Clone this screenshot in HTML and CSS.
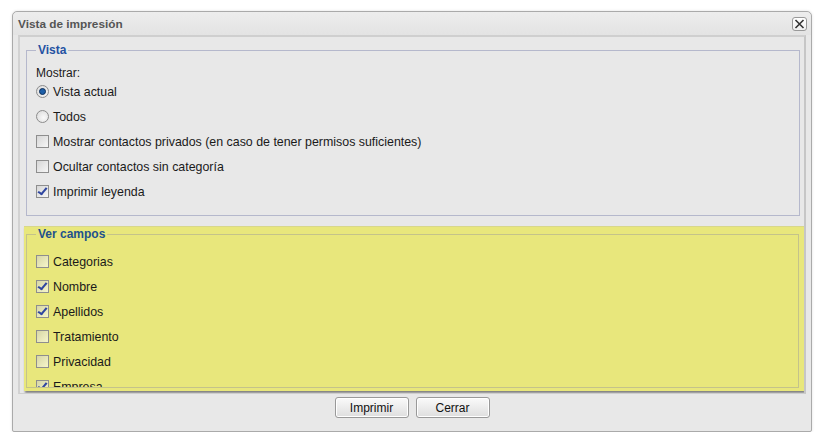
FILE: index.html
```html
<!DOCTYPE html>
<html>
<head>
<meta charset="utf-8">
<link rel="stylesheet" href="styles.css">
</head>
<body>
<div class="dialog">
  <div class="titlebar">
    <span class="title">Vista de impresión</span>
    <span class="close"><svg width="13" height="12" viewBox="0 0 13 12"><path d="M2.5 2 L10.5 10 M10.5 2 L2.5 10" stroke="#333" stroke-width="1.6" fill="none"/></svg></span>
  </div>
  <div class="panel">
    <fieldset class="fs fs-vista">
      <legend>Vista</legend>
      <div class="label">Mostrar:</div>
      <div class="row"><span class="radio on"></span>Vista actual</div>
      <div class="row"><span class="radio"></span>Todos</div>
      <div class="row"><span class="cb"></span>Mostrar contactos privados (en caso de tener permisos suficientes)</div>
      <div class="row"><span class="cb"></span>Ocultar contactos sin categoría</div>
      <div class="row"><span class="cb on"></span>Imprimir leyenda</div>
    </fieldset>
    <div class="drop">
      <fieldset class="fs fs-campos">
        <legend>Ver campos</legend>
        <div class="row"><span class="cb"></span>Categorias</div>
        <div class="row"><span class="cb on"></span>Nombre</div>
        <div class="row"><span class="cb on"></span>Apellidos</div>
        <div class="row"><span class="cb"></span>Tratamiento</div>
        <div class="row"><span class="cb"></span>Privacidad</div>
        <div class="row"><span class="cb on"></span>Empresa</div>
      </fieldset>
    </div>
  </div>
  <div class="buttons">
    <button class="btn">Imprimir</button>
    <button class="btn">Cerrar</button>
  </div>
</div>
</body>
</html>
```
FILE: styles.css
```css
body {
  margin: 0;
  background: #fff;
  font-family: "Liberation Sans", Arial, sans-serif;
  color: #1a1a1a;
}
.dialog {
  margin: 11px 0 0 12px;
  width: 798px;
  height: 419px;
  border: 1px solid #aaa;
  border-radius: 5px 5px 2px 2px;
  background: #e8e8e8;
  box-shadow: 0 0 3px rgba(0,0,0,0.12);
  display: flex;
  flex-direction: column;
}
.titlebar {
  height: 23px;
  flex: none;
  display: flex;
  align-items: center;
  justify-content: space-between;
  padding: 0 4px 0 5px;
  background: linear-gradient(#ededed, #e3e3e3);
  border-radius: 5px 5px 0 0;
}
.title {
  font-weight: bold;
  font-size: 11.8px;
  color: #555;
}
.close {
  width: 13px;
  height: 12px;
  border: 1px solid #999;
  border-radius: 3px;
  background: linear-gradient(#fff, #f0f0f0);
  display: flex;
}
.panel {
  flex: none;
  margin: 0 5px 0 5px;
  height: 356px;
  border-top: 2px solid #cfcfcf;
  border-left: 2px solid #d2d2d2;
  border-right: 2px solid #c6c6c6;
  border-bottom: 1px solid #cfcfcf;
  overflow: hidden;
}
.fs {
  border: 1px solid #b5b8cc;
  padding: 0 9px;
  margin: 0;
  min-width: 0;
}
.fs legend {
  padding: 0 2px;
  font-weight: bold;
  font-size: 12px;
  line-height: 12px;
  color: #2452a2;
}
.fs-vista {
  margin: 7px 4px 0 6px;
  padding-top: 11px;
  padding-bottom: 11px;
}
.label {
  font-size: 12px;
  line-height: 12px;
}
.row {
  height: 25px;
  display: flex;
  align-items: center;
  font-size: 12.4px;
  white-space: nowrap;
}
.radio {
  width: 11px;
  height: 11px;
  border: 1px solid #8c8c8c;
  border-radius: 50%;
  background: radial-gradient(circle at 60% 60%, #fafafa, #d8d8d8);
  margin-right: 4px;
  flex: none;
  display: flex;
  align-items: center;
  justify-content: center;
}
.radio.on::after {
  content: "";
  width: 5px;
  height: 5px;
  border-radius: 50%;
  background: #1d5fa8;
  border: 1px solid #10305a;
}
.cb {
  width: 11px;
  height: 11px;
  border: 1px solid #8e8e8e;
  background: linear-gradient(135deg, rgba(200,200,200,0.55), rgba(255,255,255,0.6));
  margin-right: 4px;
  flex: none;
  position: relative;
}
.cb.on::after {
  content: "";
  position: absolute;
  left: 3px;
  top: 0px;
  width: 3px;
  height: 7px;
  border-right: 2px solid #2f46a0;
  border-bottom: 2px solid #2f46a0;
  transform: rotate(40deg) skewY(-8deg);
}
.drop {
  margin: 10px 0 0 4px;
  background: #e8e77c;
  padding: 1px 5px 3px 2px;
  border-top: 1px solid #d8d78a;
  box-shadow: 1px 2px 2px rgba(0,0,0,0.45);
}
.fs-campos {
  height: 160px;
  box-sizing: border-box;
  overflow: hidden;
  padding-top: 9px;
  border-color: #c4c38a;
}
.fs-campos legend {
  color: #22528c;
}
.buttons {
  display: flex;
  justify-content: center;
  gap: 7px;
  padding-top: 3px;
}
.btn {
  width: 74px;
  height: 21px;
  font-family: "Liberation Sans", Arial, sans-serif;
  font-size: 12px;
  color: #111;
  border: 1px solid #999;
  border-radius: 3px;
  background: linear-gradient(#fafafa, #dedede);
  box-shadow: inset 0 0 0 1px #fff;
  padding: 0;
}
```
